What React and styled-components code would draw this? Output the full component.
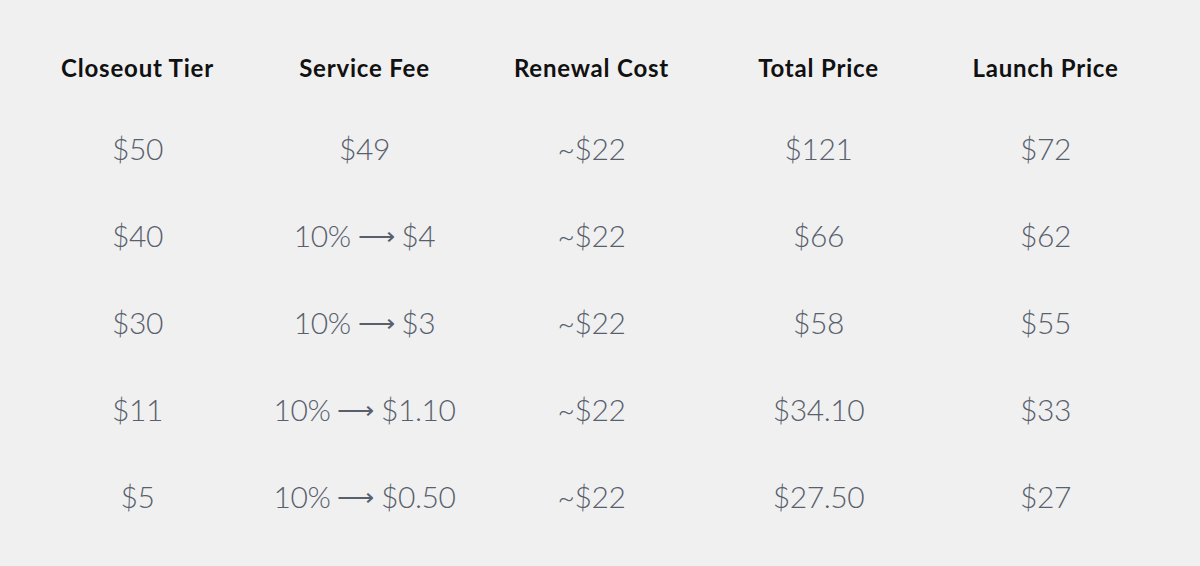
import styled, { createGlobalStyle } from 'styled-components';

const GlobalStyle = createGlobalStyle`
  html, body {
    margin: 0;
    padding: 0;
    background: #f0f0f0;
  }
  body {
    font-family: Lato, "Open Sans", sans-serif;
  }
`;

const Page = styled.div`
  width: 1200px;
  height: 566px;
  box-sizing: border-box;
  padding: 29px 0 0 24px;
  background: #f0f0f0;
`;

const Table = styled.div`
  display: grid;
  grid-template-columns: repeat(5, 227px);
  grid-template-rows: 77px repeat(5, 87px);
`;

const Head = styled.div`
  display: flex;
  align-items: center;
  justify-content: center;
  font-size: 24px;
  font-weight: 700;
  color: #111111;
  letter-spacing: 0.8px;
`;

const Cell = styled.div`
  display: flex;
  align-items: center;
  justify-content: center;
  padding-bottom: 3px;
  font-size: 30px;
  font-weight: 300;
  color: #585f6d;
  letter-spacing: -0.4px;
`;

const Arrow = styled.span`
  margin: 0 7px;
  font-size: 26px;
`;

const headers = ['Closeout Tier', 'Service Fee', 'Renewal Cost', 'Total Price', 'Launch Price'];

const rows = [
  ['$50', ['$49'], '~$22', '$121', '$72'],
  ['$40', ['10%', '$4'], '~$22', '$66', '$62'],
  ['$30', ['10%', '$3'], '~$22', '$58', '$55'],
  ['$11', ['10%', '$1.10'], '~$22', '$34.10', '$33'],
  ['$5', ['10%', '$0.50'], '~$22', '$27.50', '$27'],
];

const Fee = ({ parts }) =>
  parts.length === 1 ? (
    parts[0]
  ) : (
    <>
      {parts[0]}
      <Arrow>⟶</Arrow>
      {parts[1]}
    </>
  );

export default function App() {
  return (
    <>
      <GlobalStyle />
      <Page>
        <Table>
          {headers.map((h) => (
            <Head key={h}>{h}</Head>
          ))}
          {rows.map((r, i) => [
            <Cell key={`a${i}`}>{r[0]}</Cell>,
            <Cell key={`b${i}`}>
              <Fee parts={r[1]} />
            </Cell>,
            <Cell key={`c${i}`}>{r[2]}</Cell>,
            <Cell key={`d${i}`}>{r[3]}</Cell>,
            <Cell key={`e${i}`}>{r[4]}</Cell>,
          ])}
        </Table>
      </Page>
    </>
  );
}
